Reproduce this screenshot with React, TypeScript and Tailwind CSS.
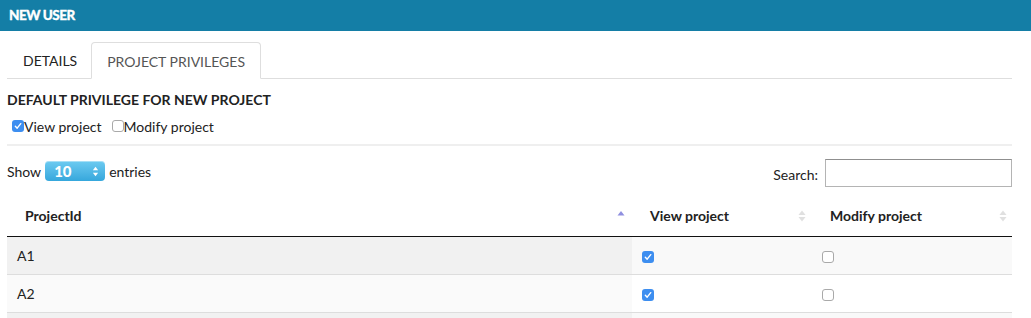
import { useState } from "react";

type Row = { id: string; view: boolean; modify: boolean };

const rows: Row[] = [
  { id: "A1", view: true, modify: false },
  { id: "A2", view: true, modify: false },
  { id: "A3", view: true, modify: false },
];

const Box = ({ checked, onClick }: { checked: boolean; onClick?: () => void }) =>
  checked ? (
    <span
      onClick={onClick}
      className="inline-flex h-[12px] w-[12px] shrink-0 cursor-pointer items-center justify-center rounded-[3px] bg-[#3d8ef0]"
    >
      <svg viewBox="0 0 12 12" className="h-[10px] w-[10px]">
        <path d="M2.8 6.3 L5 8.6 L9.3 3.2" fill="none" stroke="#fff" strokeWidth="1.7" strokeLinecap="round" strokeLinejoin="round" />
      </svg>
    </span>
  ) : (
    <span
      onClick={onClick}
      className="inline-block h-[12px] w-[12px] shrink-0 cursor-pointer rounded-[3px] border border-[#a9a9a9] bg-white"
    />
  );

const SortBoth = () => (
  <svg viewBox="0 0 8 12" className="h-[12px] w-[8px]">
    <path d="M4 0.5 L7.5 5 L0.5 5 Z" fill="#e0e0e0" />
    <path d="M4 11.5 L7.5 7 L0.5 7 Z" fill="#e0e0e0" />
  </svg>
);

const SortUp = () => (
  <svg viewBox="0 0 8 12" className="h-[12px] w-[8px]">
    <path d="M4 1 L7.5 5.5 L0.5 5.5 Z" fill="#8f8fe0" />
  </svg>
);

const App = () => {
  const [defView, setDefView] = useState(true);
  const [defModify, setDefModify] = useState(false);
  const [data, setData] = useState(rows);

  const toggle = (i: number, key: "view" | "modify") =>
    setData((prev) => prev.map((r, j) => (j === i ? { ...r, [key]: !r[key] } : r)));

  return (
    <div className="h-[318px] w-[1031px] overflow-hidden bg-white font-['Lato','Liberation_Sans',sans-serif] text-[14px] text-[#222]">
      <div className="flex h-[31px] items-center bg-[#147ea6] pl-[9px] text-[13.5px] font-black tracking-[-0.5px] text-white [-webkit-text-stroke:0.3px_white]">
        NEW USER
      </div>

      <div className="pl-[7px] pr-[19px]">
        <div className="mt-[11px] flex h-[37px] items-end border-b border-[#dedede]">
          <div className="flex h-[36px] items-center pl-[16px] pr-[14px] text-[#222]">DETAILS</div>
          <div className="-mb-px flex h-[37px] items-center rounded-t-[4px] border border-b-white border-[#dedede] bg-white px-[15px] pt-[1px] text-[#555]">
            PROJECT PRIVILEGES
          </div>
        </div>

        <div className="mt-[11px] h-[20px] font-bold leading-[20px] text-[#222]">DEFAULT PRIVILEGE FOR NEW PROJECT</div>

        <div className="mt-[6px] flex h-[20px] items-center pl-[5px] text-[#222]">
          <Box checked={defView} onClick={() => setDefView((p) => !p)} />
          <span className="mr-[10px]">View project</span>
          <Box checked={defModify} onClick={() => setDefModify((p) => !p)} />
          <span>Modify project</span>
        </div>

        <div className="mt-[8px] h-[2px] w-full bg-[#efefef]" />

        <div className="mt-[13px] flex h-[28px] items-start justify-between">
          <div className="mt-[2px] flex h-[20px] items-center text-[#222]">
            <span>Show</span>
            <div className="mx-[4px] flex h-[20px] w-[60px] items-center justify-between rounded-[4px] bg-gradient-to-b from-[#6ccbf1] to-[#35a7dc] pl-[9px] pr-[6px] text-[15px] font-black text-white shadow-[inset_0_1px_0_rgba(255,255,255,0.4)]">
              <span>10</span>
              <svg viewBox="0 0 8 12" className="h-[11px] w-[7px]">
                <path d="M4 0.5 L7 4.5 L1 4.5 Z" fill="#fff" />
                <path d="M4 11.5 L7 7.5 L1 7.5 Z" fill="#fff" />
              </svg>
            </div>
            <span>entries</span>
          </div>
          <div className="flex h-[28px] items-center text-[#222]">
            <span className="mr-[7px] mt-[2px]">Search:</span>
            <input className="h-[28px] w-[187px] border border-[#b4b4b4] border-t-[#8f8f8f] bg-white outline-none" />
          </div>
        </div>

        <div className="mt-[8px] w-full">
          <div className="grid h-[42px] grid-cols-[625px_180px_1fr] border-b border-[#111] font-bold text-[#222]">
            <div className="flex items-center justify-between pl-[18px] pr-[7px]">
              <span>ProjectId</span>
              <SortUp />
            </div>
            <div className="flex items-center justify-between pl-[18px] pr-[6px]">
              <span>View project</span>
              <SortBoth />
            </div>
            <div className="flex items-center justify-between pl-[18px] pr-[5px]">
              <span>Modify project</span>
              <SortBoth />
            </div>
          </div>
          {data.map((r, i) => (
            <div
              key={r.id}
              className={`grid h-[38px] grid-cols-[625px_180px_1fr] border-b border-[#dddddd] ${i % 2 === 0 ? "bg-[#f9f9f9]" : "bg-white"}`}
            >
              <div className={`flex items-center pl-[10px] text-[#222] ${i % 2 === 0 ? "bg-[#f1f1f1]" : "bg-[#fafafa]"}`}>{r.id}</div>
              <div className="flex items-center pl-[10px] pt-[3px]">
                <Box checked={r.view} onClick={() => toggle(i, "view")} />
              </div>
              <div className="flex items-center pl-[10px] pt-[3px]">
                <Box checked={r.modify} onClick={() => toggle(i, "modify")} />
              </div>
            </div>
          ))}
        </div>
      </div>
    </div>
  );
};

export default App;
